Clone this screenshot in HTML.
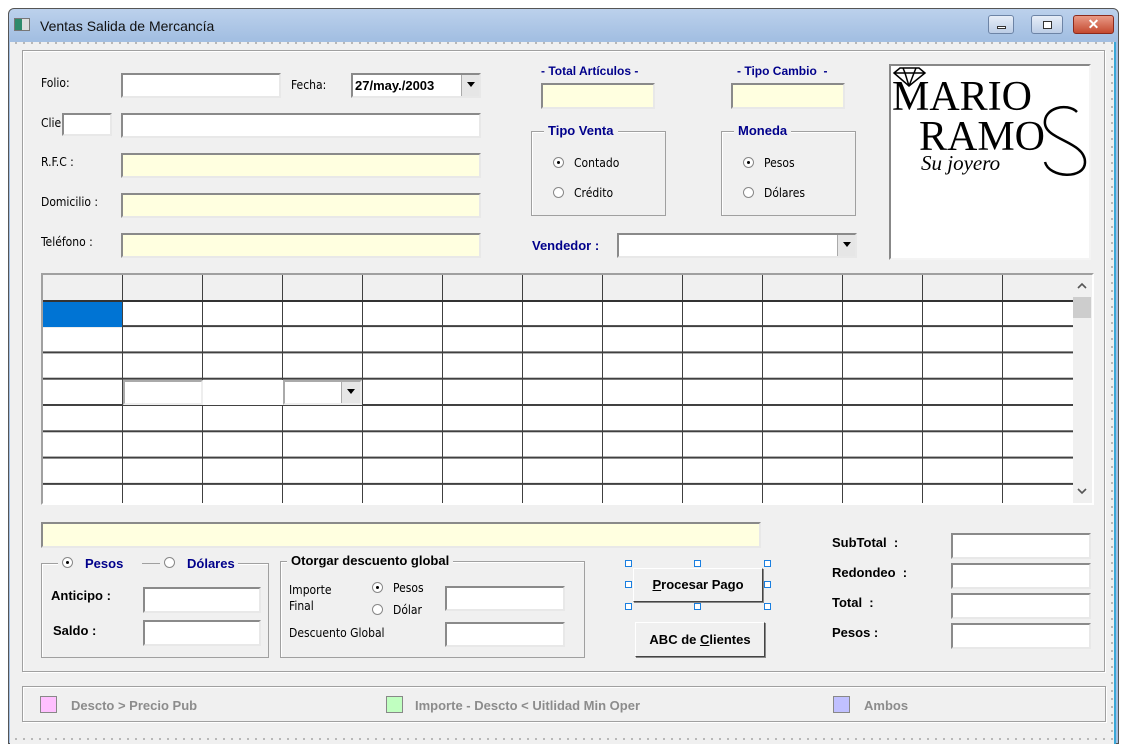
<!DOCTYPE html>
<html><head><meta charset="utf-8"><style>
*{box-sizing:border-box;margin:0;padding:0}
body{width:1137px;height:744px;background:#fff;position:relative;overflow:hidden;font-family:"Liberation Sans",Arial,sans-serif;font-size:12px;color:#000}
.a{position:absolute}
.win{left:8px;top:8px;width:1111px;height:736px;border:1px solid #555;border-radius:6px 6px 0 0;background:linear-gradient(#bcd1ec,#a3bfe2 30px);}
.client{left:10px;top:42px;width:1106px;height:702px;background:#f0f0f0;border-right:2px solid #39a7d6;
background-image:radial-gradient(#333 0.7px,transparent 0.8px);background-size:8px 8px;background-position:2px -3px}
.cbg{left:14px;top:49px;width:1096px;height:688px;background:#f0f0f0}
.frame{border:1px solid #a0a0a0;box-shadow:inset 1px 1px 0 #fff,1px 1px 0 #fff}
.inp{background:#fff;border:2px solid;border-color:#8a8a8a #e8e8e8 #e8e8e8 #8a8a8a}
.y{background:#ffffe0}
.lbl{font-size:12px;color:#000;font-family:"DejaVu Sans Condensed","Liberation Sans Narrow","Liberation Sans",sans-serif;}
.b{font-weight:bold}
.blue{color:#00008b}
.grp{border:1px solid #a0a0a0;box-shadow:inset 1px 1px 0 #fff}
.leg{position:absolute;top:-9px;background:#f0f0f0;padding:0 4px;font-weight:bold;font-size:13px}
.radio{position:absolute;width:11px;height:11px;border-radius:50%;border:1px solid #888;background:#fff}
.radio.on::after{content:"";position:absolute;left:3px;top:3px;width:3px;height:3px;border-radius:50%;background:#000}
.dd{position:absolute;right:0;top:0;width:18px;height:100%;background:#e6e6e6;border-left:1px solid #aaa}
.dd::after{content:"";position:absolute;left:5px;top:7px;border:4px solid transparent;border-top:5px solid #000}
.btn{background:#f0f0f0;border:1px solid;border-color:#fff #444 #444 #fff;box-shadow:1px 1px 0 #888;font-weight:bold;font-size:13px;text-align:center}
.h{position:absolute;width:7px;height:7px;border:1px solid #1a7fe0;background:#fff}
.sq{position:absolute;width:17px;height:17px;border:1px solid #888}
.lg{color:#8c8c8c;font-weight:bold;font-size:13px}
</style></head><body>
<div class="a win"></div>
<div class="a" style="left:14px;top:18px;width:16px;height:13px;background:linear-gradient(90deg,#2e8a6b 50%,#ddd 50%);border:1px solid #777"></div>
<div class="a" style="left:40px;top:18px;font-size:14px;color:#111">Ventas Salida de Mercancía</div>
<div class="a" style="left:988px;top:15px;width:26px;height:19px;border:1px solid #6d84a6;border-radius:3px;background:linear-gradient(#e7eef8,#bccde6)"><div class="a" style="left:8px;top:10px;width:9px;height:3px;border:1px solid #333;background:#fff"></div></div>
<div class="a" style="left:1031px;top:15px;width:32px;height:19px;border:1px solid #6d84a6;border-radius:3px;background:linear-gradient(#e7eef8,#bccde6)"><div class="a" style="left:11px;top:5px;width:9px;height:8px;border:1px solid #333;background:#fff"></div></div>
<div class="a" style="left:1073px;top:15px;width:41px;height:19px;border:1px solid #8b2a1d;border-radius:3px;background:linear-gradient(#e99a87,#c44a30);color:#fff;font-weight:bold;text-align:center;font-size:14px;line-height:17px">✕</div>
<div class="a client"></div>
<div class="a cbg"></div>
<div class="a frame" style="left:22px;top:50px;width:1083px;height:622px"></div>

<div class="a lbl" style="left:41px;top:76px">Folio:</div>
<div class="a inp" style="left:121px;top:73px;width:160px;height:25px"></div>
<div class="a lbl" style="left:291px;top:78px">Fecha:</div>
<div class="a inp" style="left:351px;top:73px;width:130px;height:25px;font-weight:bold;font-size:13px;padding:3px 0 0 2px">27/may./2003<div class="dd"></div></div>
<div class="a lbl" style="left:41px;top:116px">Clie</div>
<div class="a inp" style="left:62px;top:113px;width:50px;height:23px"></div>
<div class="a inp" style="left:121px;top:113px;width:360px;height:25px"></div>
<div class="a lbl" style="left:41px;top:155px">R.F.C :</div>
<div class="a inp y" style="left:121px;top:153px;width:360px;height:25px"></div>
<div class="a lbl" style="left:41px;top:195px">Domicilio :</div>
<div class="a inp y" style="left:121px;top:193px;width:360px;height:25px"></div>
<div class="a lbl" style="left:41px;top:235px">Teléfono :</div>
<div class="a inp y" style="left:121px;top:233px;width:360px;height:25px"></div>

<div class="a b blue" style="left:541px;top:64px;font-size:12px">- Total Artículos -</div>
<div class="a inp y" style="left:541px;top:83px;width:114px;height:26px"></div>
<div class="a b blue" style="left:737px;top:64px;font-size:12px">- Tipo Cambio &nbsp;-</div>
<div class="a inp y" style="left:731px;top:83px;width:114px;height:26px"></div>
<div class="a grp" style="left:531px;top:131px;width:135px;height:85px"><span class="leg blue" style="left:12px">Tipo Venta</span></div>
<div class="radio on" style="left:553px;top:157px"></div><div class="a lbl" style="left:574px;top:156px">Contado</div>
<div class="radio" style="left:553px;top:187px"></div><div class="a lbl" style="left:574px;top:186px">Crédito</div>
<div class="a grp" style="left:721px;top:131px;width:135px;height:85px"><span class="leg blue" style="left:12px">Moneda</span></div>
<div class="radio on" style="left:743px;top:157px"></div><div class="a lbl" style="left:764px;top:156px">Pesos</div>
<div class="radio" style="left:743px;top:187px"></div><div class="a lbl" style="left:764px;top:186px">Dólares</div>
<div class="a b blue" style="left:532px;top:238px;font-size:13px">Vendedor :</div>
<div class="a inp" style="left:617px;top:233px;width:240px;height:25px"><div class="dd"></div></div>

<div class="a inp" style="left:889px;top:64px;width:202px;height:196px;border-color:#888 #f4f4f4 #f4f4f4 #888"></div>
<svg class="a" style="left:891px;top:66px" width="200" height="120">
<path d="M3 7 L9 2 L28 2 L34 7 L18 20 Z M3 7 H34 M12 2 L14 7 L18 20 M25 2 L23 7 L18 20" fill="none" stroke="#000" stroke-width="1.5"/>
<text x="1" y="44" font-family="Liberation Serif,serif" font-size="42" textLength="140" lengthAdjust="spacingAndGlyphs">MARIO</text>
<text x="28" y="84" font-family="Liberation Serif,serif" font-size="42" textLength="126" lengthAdjust="spacingAndGlyphs">RAMO</text>
<path d="M186 46 C176 36 152 42 154 58 C156 74 194 76 194 96 C194 114 158 112 154 96" fill="none" stroke="#000" stroke-width="2.5"/>
<text x="30" y="104" font-family="Liberation Serif,serif" font-style="italic" font-size="21">Su joyero</text>
</svg>

<div class="a" style="left:41px;top:273px;width:1053px;height:232px;border:2px solid #a0a0a0;border-right-color:#fff;border-bottom-color:#fff;background:#f0f0f0"></div>
<div class="a" style="left:43px;top:275px;width:1030px;height:228px;background:#fff;
background-image:linear-gradient(90deg,transparent 79px,#404040 79px,#404040 81px,transparent 81px),linear-gradient(transparent 24px,#404040 24px,#404040 26px,transparent 26px);background-size:80px 100%,100% 26.3px;background-position:0 0,0 0;overflow:hidden">
<div class="a" style="left:0;top:0;width:1030px;height:25px;background:#f0f0f0;background-image:linear-gradient(90deg,transparent 79px,#404040 79px,#404040 81px,#fff 81px,#fff 82px,transparent 82px);background-size:80px 100%"></div>
<div class="a" style="left:0;top:25px;width:1030px;height:2px;background:#333"></div>
<div class="a" style="left:0;top:27px;width:79px;height:25px;background:#0074d4"></div>
<div class="a" style="left:80px;top:105px;width:80px;height:25px;background:#fff;border:2px solid;border-color:#aaa #eee #eee #aaa"></div>
<div class="a" style="left:160px;top:105px;width:80px;height:25px;background:#fff"></div>
<div class="a" style="left:240px;top:105px;width:79px;height:25px;background:#fff;border:2px solid;border-color:#aaa #eee #eee #aaa"><div class="dd" style="width:19px"></div></div>
</div>
<div class="a" style="left:1073px;top:275px;width:19px;height:228px;background:#f0f0f0"></div>
<div class="a" style="left:1073px;top:297px;width:18px;height:21px;background:#cdcdcd"></div>
<svg class="a" style="left:1076px;top:281px" width="12" height="10"><path d="M2 7 L6 3 L10 7" fill="none" stroke="#555" stroke-width="1.6"/></svg>
<svg class="a" style="left:1076px;top:486px" width="12" height="10"><path d="M2 3 L6 7 L10 3" fill="none" stroke="#555" stroke-width="1.6"/></svg>

<div class="a inp y" style="left:41px;top:522px;width:720px;height:26px"></div>
<div class="a grp" style="left:41px;top:563px;width:228px;height:95px"></div>
<div class="a" style="left:58px;top:556px;background:#f0f0f0;width:180px;height:14px"></div>
<div class="radio on" style="left:62px;top:557px"></div><div class="a b blue" style="left:85px;top:556px;font-size:13px">Pesos</div>
<div class="a" style="left:142px;top:563px;width:18px;height:1px;background:#a0a0a0"></div>
<div class="radio" style="left:164px;top:557px"></div><div class="a b blue" style="left:187px;top:556px;font-size:13px">Dólares</div>
<div class="a b" style="left:51px;top:588px;font-size:13px">Anticipo :</div>
<div class="a inp" style="left:143px;top:587px;width:118px;height:26px"></div>
<div class="a b" style="left:53px;top:623px;font-size:13px">Saldo :</div>
<div class="a inp" style="left:143px;top:620px;width:118px;height:26px"></div>

<div class="a grp" style="left:280px;top:561px;width:305px;height:97px"><span class="leg" style="left:6px;color:#000">Otorgar descuento global</span></div>
<div class="a lbl" style="left:289px;top:582px;line-height:16px">Importe<br>Final</div>
<div class="radio on" style="left:372px;top:582px"></div><div class="a lbl" style="left:393px;top:581px">Pesos</div>
<div class="radio" style="left:372px;top:604px"></div><div class="a lbl" style="left:393px;top:603px">Dólar</div>
<div class="a inp" style="left:445px;top:586px;width:120px;height:25px"></div>
<div class="a lbl" style="left:289px;top:626px">Descuento Global</div>
<div class="a inp" style="left:445px;top:622px;width:120px;height:25px"></div>

<div class="a btn" style="left:633px;top:568px;width:130px;height:34px;line-height:32px"><u>P</u>rocesar Pago</div>
<div class="h" style="left:625px;top:560px"></div><div class="h" style="left:694px;top:560px"></div><div class="h" style="left:764px;top:560px"></div>
<div class="h" style="left:625px;top:581px"></div><div class="h" style="left:764px;top:581px"></div>
<div class="h" style="left:625px;top:603px"></div><div class="h" style="left:694px;top:603px"></div><div class="h" style="left:764px;top:603px"></div>
<div class="a btn" style="left:635px;top:622px;width:130px;height:35px;line-height:33px">ABC de <u>C</u>lientes</div>

<div class="a b" style="left:832px;top:535px;font-size:13px">SubTotal &nbsp;:</div>
<div class="a inp" style="left:951px;top:533px;width:140px;height:26px"></div>
<div class="a b" style="left:832px;top:565px;font-size:13px">Redondeo &nbsp;:</div>
<div class="a inp" style="left:951px;top:563px;width:140px;height:26px"></div>
<div class="a b" style="left:832px;top:595px;font-size:13px">Total &nbsp;:</div>
<div class="a inp" style="left:951px;top:593px;width:140px;height:26px"></div>
<div class="a b" style="left:832px;top:625px;font-size:13px">Pesos :</div>
<div class="a inp" style="left:951px;top:623px;width:140px;height:26px"></div>

<div class="a frame" style="left:22px;top:686px;width:1084px;height:36px"></div>
<div class="sq" style="left:40px;top:696px;background:#ffc0ff"></div><div class="a lg" style="left:71px;top:698px">Descto &gt; Precio Pub</div>
<div class="sq" style="left:386px;top:696px;background:#c0ffc0"></div><div class="a lg" style="left:415px;top:698px">Importe - Descto &lt; Uitlidad Min Oper</div>
<div class="sq" style="left:833px;top:696px;background:#c0c0ff"></div><div class="a lg" style="left:864px;top:698px">Ambos</div>
</body></html>
